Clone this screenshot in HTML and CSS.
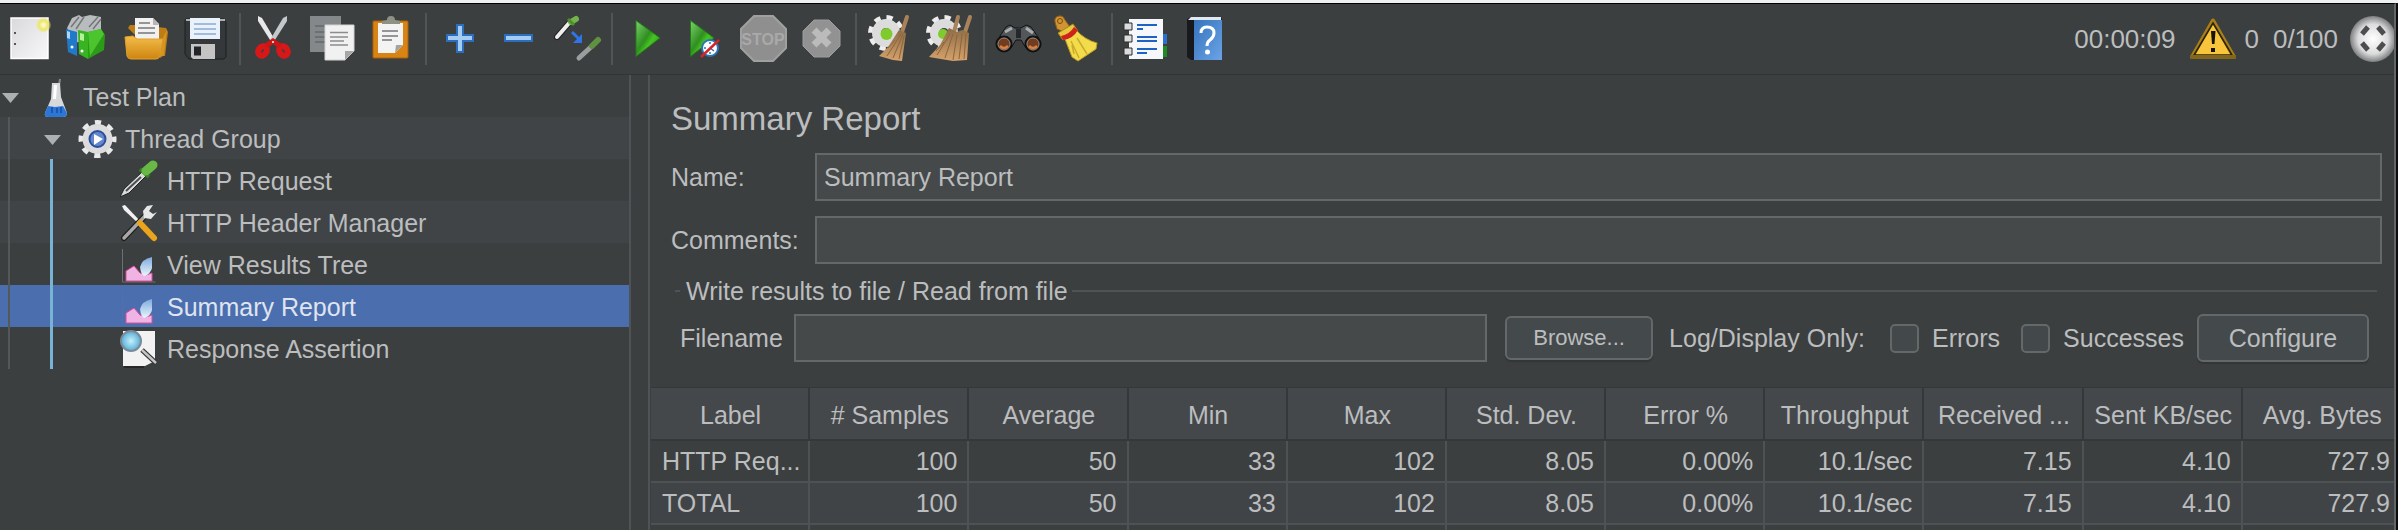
FILE: index.html
```html
<!DOCTYPE html>
<html lang="en">
<head>
<meta charset="utf-8">
<title>Summary Report</title>
<link rel="stylesheet" href="styles.css">
</head>
<body>
<svg class="defs" width="0" height="0" aria-hidden="true">
  <defs>
    <linearGradient id="paper" x1="0" y1="0" x2="1" y2="1"><stop offset="0" stop-color="#d9d9db"/><stop offset="1" stop-color="#f8f8fa"/></linearGradient>
    <linearGradient id="folder" x1="0" y1="0" x2="0" y2="1"><stop offset="0" stop-color="#f3bd4b"/><stop offset="1" stop-color="#cf8410"/></linearGradient>
    <linearGradient id="play" x1="0" y1="0" x2="1" y2="1"><stop offset="0" stop-color="#7fd070"/><stop offset=".45" stop-color="#2f8f20"/><stop offset=".6" stop-color="#46c522"/><stop offset="1" stop-color="#1d7a12"/></linearGradient>
    <linearGradient id="bristle" x1="0" y1="0" x2="0" y2="1"><stop offset="0" stop-color="#8e6b45"/><stop offset="1" stop-color="#d5a36c"/></linearGradient>
    <linearGradient id="book" x1="0" y1="0" x2="1" y2="1"><stop offset="0" stop-color="#3574bd"/><stop offset="1" stop-color="#6ba3e6"/></linearGradient>
    <linearGradient id="glass" x1="0" y1="0" x2="0" y2="1"><stop offset="0" stop-color="#7fa9dc"/><stop offset="1" stop-color="#e8f7fd"/></linearGradient>
    <radialGradient id="ball"><stop offset="0" stop-color="#ffffff"/><stop offset=".65" stop-color="#dcdcdc"/><stop offset="1" stop-color="#7d7f80"/></radialGradient>
    <radialGradient id="lens"><stop offset="0" stop-color="#c4f2fb"/><stop offset="1" stop-color="#5aabd8"/></radialGradient>
    <radialGradient id="glow"><stop offset="0" stop-color="#fffde0"/><stop offset=".6" stop-color="#ece66a"/><stop offset="1" stop-color="#ece66a" stop-opacity=".2"/></radialGradient>
  </defs>
</svg>
<div class="strip"></div>
<div class="window">
  <header class="toolbar">
    <button class="tool" aria-label="New"><svg viewBox="2 4 58 70"><path d="M11 18H48V58.500H11Z" fill="url(#paper)" stroke="#fff" stroke-width="1.500"/><path d="M15 32v2M15 43v2" stroke="#555" stroke-width="2"/><circle cx="43.500" cy="25" r="7.500" fill="url(#glow)"/></svg></button>
    <button class="tool" aria-label="Templates"><svg viewBox="60 4 58 70"><path d="M67 28l5-10 7-3 3 2 8-2 11 2v18l-26 8Z" fill="#b9bcbe"/><path d="M71 27l8-10M76 29l8-12M89 27l9-10M93 29l8-10" stroke="#73777a" stroke-width="1.500"/><path d="M66 29l11 3v24l-9-4Z" fill="#2179c9"/><path d="M67 31l3 1v7l-3-1Z" fill="#a9d6fa"/><path d="M78 30l10 2v27l-9-5Z" fill="#38b423"/><path d="M88 32l13-3 4 6-1 15-16 9Z" fill="#2c9c18"/><path d="M88 32l13-3 3 5-14 22Z" fill="#4cc42e"/><path d="M80 33l4 1v7l-4-1Z" fill="#b7f09b"/><circle cx="82" cy="51" r="1.500" fill="#fff"/><circle cx="72" cy="47" r="1.500" fill="#fff"/></svg></button>
    <button class="tool" aria-label="Open"><svg viewBox="118 4 58 70"><path d="M128 28l2-3h10l26 3 2 4-3 24h-9Z" fill="#bd7d14"/><path d="M135 18h18l6 6v16h-24Z" fill="#f1f1f1"/><path d="M153 18l6 7h-6Z" fill="#b5b5b5"/><path d="M139 23h11M138 28h17M138 33h17" stroke="#777" stroke-width="1.500"/><path d="M125 37l8-1 4 3h26l-3 17q-1 3-4 3h-25q-3 0-4-3Z" fill="url(#folder)" stroke="#dfa02a"/><path d="M163 38l4-9-3 26-4 3Z" fill="#d59520"/></svg></button>
    <button class="tool" aria-label="Save"><svg viewBox="176 4 58 70"><path d="M186 19H224l2 3V57l-2 2H189l-4-5V21Z" fill="#35383b" stroke="#1d1f21"/><path d="M186 19h5v2h-5ZM220 19h5v2h-5Z" fill="#b0b0b0"/><path d="M190 18h30v21h-30Z" fill="#e9f2fb"/><path d="M194 24h22M194 29h22M194 34h22" stroke="#89abd2" stroke-width="1.500"/><path d="M191 44h24v15h-22l-2-2Z" fill="#c4c4c4"/><path d="M194 46.500h7v9h-7Z" fill="#22242a"/></svg></button>
    <span class="sep"></span>
    <button class="tool" aria-label="Cut"><svg viewBox="246 4 58 70"><path d="M258 16l4 2 13 22-3 3-14-22Z" fill="#e6e8ea"/><path d="M287 16l-4 2-13 22 3 3 14-22Z" fill="#c5c8cb"/><ellipse cx="262.500" cy="51" rx="4" ry="5" transform="rotate(35 262.500 51)" fill="none" stroke="#d81818" stroke-width="6"/><ellipse cx="283.500" cy="51" rx="4" ry="5" transform="rotate(-35 283.500 51)" fill="none" stroke="#d81818" stroke-width="6"/><path d="M266 46l7-5 7 5" fill="none" stroke="#cf1414" stroke-width="5"/><circle cx="273" cy="42" r="1" fill="#fff"/></svg></button>
    <button class="tool" aria-label="Copy"><svg viewBox="304 4 58 70"><path d="M310 16H341V52H310Z" fill="#85888a"/><path d="M315 26h20M315 32h20M315 37h12M315 42h12" stroke="#65686a" stroke-width="1.500"/><path d="M325 25H354V51l-9 9H325Z" fill="#f1f1f1" stroke="#d3d3d3"/><path d="M354 51h-9v9Z" fill="#a7a7a7"/><path d="M330 32.500h18M330 37h18M330 41h14M330 45h18" stroke="#8c8c8c" stroke-width="1.500"/></svg></button>
    <button class="tool" aria-label="Paste"><svg viewBox="362 4 58 70"><rect x="373" y="21" width="35" height="37" rx="1" fill="#d78415" stroke="#a9610b"/><path d="M378 23h25v22l-8 8h-17Z" fill="#f3f3f3"/><path d="M403 45h-7l-1 8Z" fill="#a3a3a3"/><path d="M382 31h16M382 36h16M382 40h10" stroke="#777" stroke-width="1.500"/><path d="M382 24v-3l5-1q0-4 4-4t4 4l5 1v3Z" fill="#8e9186"/></svg></button>
    <span class="sep"></span>
    <button class="tool" aria-label="Expand All"><svg viewBox="432 4 58 70"><path d="M457 25h6v10h10v6h-10v11h-6V41h-10v-6h10Z" fill="#a5cbf0" stroke="#2a6ebd" stroke-width="2"/></svg></button>
    <button class="tool" aria-label="Collapse All"><svg viewBox="490 4 58 70"><path d="M505 35h27v6h-27Z" fill="#a5cbf0" stroke="#2a6ebd" stroke-width="2"/></svg></button>
    <button class="tool" aria-label="Toggle"><svg viewBox="548 4 58 70"><path d="M557 37l13-15" stroke="#222" stroke-width="6" stroke-linecap="round"/><path d="M557 37l13-15" stroke="#eee" stroke-width="4" stroke-linecap="round"/><path d="M571 22l5-3" stroke="#74b34c" stroke-width="6" stroke-linecap="round"/><path d="M568 19l6 6" stroke="#4c8f2c" stroke-width="3"/><path d="M572 32l7 7" stroke="#2f74e8" stroke-width="3"/><path d="M582 34v9h-9Z" fill="#2f74e8"/><path d="M579 58l13-12" stroke="#9b9d9e" stroke-width="5" stroke-linecap="round"/><path d="M592 46l6-6" stroke="#5e9140" stroke-width="6" stroke-linecap="round"/></svg></button>
    <span class="sep"></span>
    <button class="tool" aria-label="Start"><svg viewBox="618 4 58 70"><path d="M636 20.500L660 38 636 56.500Z" fill="url(#play)" stroke="#1f7d14" stroke-linejoin="round"/></svg></button>
    <button class="tool" aria-label="Start no pauses"><svg viewBox="676 4 58 70"><path d="M690.500 20.500L714 38 690.500 56.500Z" fill="url(#play)" stroke="#1f7d14" stroke-linejoin="round"/><circle cx="710" cy="48" r="8" fill="#fff" stroke="#2b74b8" stroke-width="2"/><path d="M710 42v2M710 52v2M704 48h2M710 48l4 3" stroke="#2b74b8" stroke-width="1.500"/><path d="M701 57l18-17" stroke="#d6242c" stroke-width="2.500"/></svg></button>
    <button class="tool" aria-label="Stop" disabled><svg viewBox="734 4 58 70"><path d="M754 16h19l13 13v19l-13 13h-19l-13-13V29Z" fill="#8f8f8f" stroke="#a0a0a0" stroke-width="2"/><text class="stop-text" x="763" y="45" text-anchor="middle">STOP</text></svg></button>
    <button class="tool" aria-label="Shutdown" disabled><svg viewBox="792 4 58 70"><path d="M814 20h15l11 11v15l-11 11h-15l-11-11V31Z" fill="#929292" stroke="#9d9d9d"/><path d="M814 30l15 15M829 30l-15 15" stroke="#bbb" stroke-width="7"/></svg></button>
    <span class="sep"></span>
    <button class="tool" aria-label="Clear"><svg viewBox="862 4 58 70"><circle cx="886" cy="33" r="15" fill="none" stroke="#ededed" stroke-width="6" stroke-dasharray="6 5.780"/><circle cx="886" cy="33" r="9.500" fill="none" stroke="#dcdcdc" stroke-width="9"/><circle cx="886.500" cy="34" r="6" fill="#7fcb2d"/><path d="M907 17l-5 15" stroke="#a98259" stroke-width="4" stroke-linecap="round"/><path d="M899 30l7 3-4 28-9-1-14-4 9-9Z" fill="url(#bristle)"/><path d="M901 34l-14 22M903 34l-10 24M904 36l-5 23M895 40l-7 8" stroke="#8a653e" stroke-width="1" fill="none"/></svg></button>
    <button class="tool" aria-label="Clear All"><svg viewBox="920 4 58 70"><circle cx="944" cy="33" r="15" fill="none" stroke="#ededed" stroke-width="6" stroke-dasharray="6 5.780"/><circle cx="944" cy="33" r="9.500" fill="none" stroke="#dcdcdc" stroke-width="9"/><circle cx="943" cy="34" r="5" fill="#7fcb2d"/><path d="M958 17l-4 15M970 17l-5 15" stroke="#a98259" stroke-width="4" stroke-linecap="round"/><path d="M949 28l8 4 5-2 7 3-2 27-14 1-24-4 11-12Z" fill="url(#bristle)"/><path d="M950 34l-13 21M953 34l-8 24M957 35l-4 25M962 34l-3 25M966 34l-2 25M944 42l-8 9" stroke="#8a653e" stroke-width="1" fill="none"/></svg></button>
    <span class="sep"></span>
    <button class="tool" aria-label="Search"><svg viewBox="990 4 58 70"><path d="M1010 25l5 3h6l5-3 5 2 7 10 3 8-15 3-5-8h-5l-5 8-14-3 3-9 6-9Z" fill="#54575a" stroke="#111"/><path d="M1005 32l7-4M1026 28l7 5" stroke="#a8adb1" stroke-width="3"/><path d="M1016 29h5v9h-5Z" fill="#25282b"/><circle cx="1004" cy="44" r="7.500" fill="#713c20" stroke="#111" stroke-width="2"/><circle cx="1033" cy="44" r="7.500" fill="#713c20" stroke="#111" stroke-width="2"/><circle cx="1004" cy="44" r="6" fill="none" stroke="#90857d"/><circle cx="1033" cy="44" r="6" fill="none" stroke="#90857d"/><path d="M1000 46q4 4 8 0M1029 46q4 4 8 0" stroke="#d68142" stroke-width="2.500" fill="none"/></svg></button>
    <button class="tool" aria-label="Reset Search"><svg viewBox="1048 4 58 70"><path d="M1055 22q-1-5 4-6 4-1 6 4l5 7-6 5-7-3Z" fill="#d09434" stroke="#8f5d15"/><circle cx="1060" cy="21" r="2.500" fill="none" stroke="#7b4d0c"/><path d="M1058 33l15-9 5 7-15 9Z" fill="#e8c63d" stroke="#a5861c"/><path d="M1065 39l11-9q9 10 21 13l-1 6-18 12-6-4Z" fill="#f2dc4c" stroke="#c09c20"/><path d="M1071 41l8 17M1077 38l10 16M1072 45l2 9" stroke="#cdaa2b" stroke-width="1.500"/><path d="M1061 36q9-2 13-9l4 3q-5 9-15 10Z" fill="#cf241b"/></svg></button>
    <span class="sep"></span>
    <button class="tool" aria-label="Function Helper"><svg viewBox="1118 4 58 70"><path d="M1160 34h7v10h-7Z" fill="#2c6fd0"/><path d="M1160 46h7v11h-7Z" fill="#1d8a22"/><path d="M1129 19h34v40h-34Z" fill="#f5f7fb"/><path d="M1137 25h20M1137 29h6M1137 37h20M1137 41h20M1137 49h20M1137 53h10" stroke="#1d62c4" stroke-width="2"/><path d="M1124 23h8v7h-8ZM1124 35h8v7h-8ZM1124 48h8v7h-8Z" fill="#dcdcdc" stroke="#2a2c2e"/></svg></button>
    <button class="tool" aria-label="Help"><svg viewBox="1176 4 58 70"><path d="M1187 19l4-2h30l1 3v40h-31l-4-3Z" fill="#17191c"/><path d="M1188 20l3-3h30v3Z" fill="#e1e8ef"/><path d="M1194 20h28v40h-28Z" fill="url(#book)"/><path d="M1201 33q0-6 6-6 7 0 7 6 0 4-4 7-3 2-3 6" fill="none" stroke="#fff" stroke-width="3"/><circle cx="1207.500" cy="52" r="2.500" fill="#fff"/></svg></button>
    <div class="status">
      <span class="elapsed">00:00:09</span>
      <button class="warn"><svg width="48" height="44" viewBox="2188 16 48 44" aria-hidden="true"><path d="M2212 19.500L2233 56H2191Z" fill="#f7c43b" stroke="#a87f16" stroke-width="4" stroke-linejoin="round"/><path d="M2212 22L2231 54H2193Z" fill="none" stroke="#29220a" stroke-width="1.500"/><path d="M2189 54h46v3q0 1-2 1h-42q-2 0-2-1Z" fill="#82661c"/><path d="M2210 30h4.500l-1 13h-2.500Z" fill="#171304"/><path d="M2210 47h4v4h-4Z" fill="#171304"/></svg><span>0</span></button>
      <span class="threads">0/100</span>
      <svg class="ball" width="44" height="48" viewBox="2350 15 44 48" aria-hidden="true"><circle cx="2373" cy="39" r="23" fill="url(#ball)"/><path d="M2362 34l6-7M2378 27l6 7M2362 43l6 7M2384 43l-6 7" stroke="#4b4d4e" stroke-width="5"/></svg>
    </div>
  </header>
  <main class="split">
    <nav class="tree" aria-label="Test plan elements">
      <ul>
        <li>
          <div class="row l0"><svg class="arrow" viewBox="0 0 36 42"><path d="M2 18h17l-8.500 10Z"/></svg><svg class="icon" viewBox="36 75 40 42"><path d="M59 85l1-6" stroke="#888" stroke-width="2"/><path d="M52 83h8l1 14 6 16q0 4-4 4H48q-4 0-3-4l6-14Z" fill="#d7d9db"/><path d="M48 106l7 1 8-1 4 7q0 4-4 4H48q-4 0-3-4Z" fill="#2c76d8"/><path d="M54 85h3l-1 14h-3Z" fill="#fff"/><path d="M52 107v6M57 108v5M61 107v6" stroke="#174d9f" stroke-width="1.500"/></svg><span>Test Plan</span></div>
          <ul class="guide g0">
            <li>
              <div class="row l1 alt"><svg class="arrow" viewBox="0 0 36 42"><path d="M2 18h17l-8.500 10Z"/></svg><svg class="icon" viewBox="78 117 40 42"><circle cx="97.500" cy="139" r="16" fill="none" stroke="#e9e9e9" stroke-width="6" stroke-dasharray="6 6.566" stroke-dashoffset="3"/><circle cx="97.500" cy="139" r="12" fill="#2b4f9c" stroke="#dcdcdc" stroke-width="6"/><circle cx="97.500" cy="139" r="7" fill="#6487c9"/><path d="M94 134l9 5-9 6Z" fill="#fff"/></svg><span>Thread Group</span></div>
              <ul class="guide g1">
                <li><div class="row l2"><svg class="icon" viewBox="120 159 40 42"><path d="M120 197l4-8 18-17 4 4-17 17Z" fill="#d9dbdd" stroke="#222"/><path d="M126 191l15-14" stroke="#4b4d4f" stroke-width="2"/><path d="M140 169l9 8" stroke="#33801f" stroke-width="4"/><path d="M146 171l7-6" stroke="#68b846" stroke-width="9" stroke-linecap="round"/></svg><span>HTTP Request</span></div></li>
                <li><div class="row l2 alt"><svg class="icon" viewBox="120 201 40 42"><path d="M122 206l3-1 16 17-2 2-15-14Z" fill="#f1f1f1"/><path d="M124 238l22-23" stroke="#1c1c1c" stroke-width="6" stroke-linecap="round"/><path d="M124 238l22-23" stroke="#a8a8a8" stroke-width="3.500" stroke-linecap="round"/><path d="M153 205l-6 1-4 5 1 7 7 1 6-7-4 2-4-3Z" fill="#e7e7e7"/><path d="M140 223l14 15" stroke="#eba41c" stroke-width="6" stroke-linecap="round"/></svg><span>HTTP Header Manager</span></div></li>
                <li><div class="row l2"><svg class="icon" viewBox="120 243 40 42"><path d="M122.500 249v33h33" fill="none" stroke="#6d6f72"/><path d="M126 271l8-5 6 7 6 2 6-2v8h-26Z" fill="#efb3e4" stroke="#d84f9c"/><path d="M152 257q-10 2-12 10 1 9 5 9 6-3 7-8Z" fill="url(#glass)"/></svg><span>View Results Tree</span></div></li>
                <li><div class="row l2 selected" aria-current="true"><svg class="icon" viewBox="120 243 40 42"><path d="M122.500 249v33h33" fill="none" stroke="#5270ab"/><path d="M126 271l8-5 6 7 6 2 6-2v8h-26Z" fill="#efb3e4" stroke="#d84f9c"/><path d="M152 257q-10 2-12 10 1 9 5 9 6-3 7-8Z" fill="url(#glass)"/></svg><span>Summary Report</span></div></li>
                <li><div class="row l2"><svg class="icon" viewBox="120 327 40 42"><path d="M123 331h32v30l-10 5h-22Z" fill="#f2f2f3"/><path d="M124 367h20" stroke="#111"/><path d="M142 350l14 13" stroke="#333" stroke-width="5"/><path d="M142 350l14 13" stroke="#c5c5c5" stroke-width="2.500"/><circle cx="131" cy="341" r="10" fill="url(#lens)" stroke="#788b96" stroke-width="2"/></svg><span>Response Assertion</span></div></li>
              </ul>
            </li>
          </ul>
        </li>
      </ul>
    </nav>
    <section class="panel">
      <form class="form">
        <h1>Summary Report</h1>
        <div class="field"><label for="name">Name:</label><input id="name" type="text" value="Summary Report"></div>
        <div class="field"><label for="comments">Comments:</label><input id="comments" type="text"></div>
        <fieldset>
          <legend>Write results to file / Read from file</legend>
          <div class="file">
            <label class="filename" for="filename">Filename</label>
            <input id="filename" type="text">
            <button class="browse" type="button">Browse...</button>
            <span class="log">Log/Display Only:</span>
            <label class="check"><input type="checkbox">Errors</label>
            <label class="check"><input type="checkbox">Successes</label>
            <button class="configure" type="button">Configure</button>
          </div>
        </fieldset>
      </form>
      <div class="results">
        <table>
          <thead><tr><th>Label</th><th># Samples</th><th>Average</th><th>Min</th><th>Max</th><th>Std. Dev.</th><th>Error %</th><th>Throughput</th><th>Received ...</th><th>Sent KB/sec</th><th>Avg. Bytes</th></tr></thead>
          <tbody>
            <tr><td>HTTP Req...</td><td>100</td><td>50</td><td>33</td><td>102</td><td>8.05</td><td>0.00%</td><td>10.1/sec</td><td>7.15</td><td>4.10</td><td>727.9</td></tr>
            <tr class="alt"><td>TOTAL</td><td>100</td><td>50</td><td>33</td><td>102</td><td>8.05</td><td>0.00%</td><td>10.1/sec</td><td>7.15</td><td>4.10</td><td>727.9</td></tr>
            <tr><td></td><td></td><td></td><td></td><td></td><td></td><td></td><td></td><td></td><td></td><td></td></tr>
          </tbody>
        </table>
      </div>
    </section>
  </main>
</div>
</body>
</html>
```
FILE: styles.css
```css
* { box-sizing: border-box; }

body {
  margin: 0;
  height: 100vh;
  display: flex;
  flex-direction: column;
  overflow: hidden;
  background: #0b0c0d;
  color: #bbbdbe;
  font: 25px/42px "Liberation Sans", Arial, sans-serif;
}

.defs { position: absolute; }

button, input { font: inherit; color: inherit; margin: 0; }

.strip { flex: none; height: 3px; background: #eef0f2; }

.window {
  flex: 1;
  min-height: 0;
  display: flex;
  flex-direction: column;
  margin-right: 2px;
  border-top: 1px solid #000;
  border-right: 2px solid #626566;
  background: #3c3f40;
}

/* Toolbar */
.toolbar {
  flex: none;
  display: flex;
  align-items: center;
  height: 71px;
  padding-left: 2px;
  border-bottom: 1px solid #323536;
}
.tool {
  flex: none;
  width: 58px;
  height: 70px;
  padding: 0;
  border: 0;
  background: none;
}
.tool svg { display: block; width: 58px; height: 70px; }
.stop-text { font: bold 16px "Liberation Sans", Arial, sans-serif; fill: #a9a9a9; }
.sep { flex: none; width: 2px; height: 52px; margin: 0 5px; background: #515557; }
.status { display: flex; align-items: center; margin-left: auto; font-size: 26px; }
.elapsed { margin-right: 14px; }
.warn {
  display: flex;
  align-items: center;
  gap: 7px;
  padding: 0;
  border: 0;
  background: none;
}
.warn svg, .ball { display: block; }
.threads { margin: 0 12px 0 14px; }

/* Split pane */
.split { flex: 1; min-height: 0; display: flex; }

.tree {
  flex: none;
  width: 631px;
  border-right: 2px solid #505355;
}
.tree ul { margin: 0; padding: 0; list-style: none; }
.row { display: flex; height: 42px; line-height: 45px; white-space: nowrap; }
.row.alt { background: #414447; }
.row.selected { background: #4b6eaf; color: #dfe4ee; }
.l1 { padding-left: 42px; }
.l2 { padding-left: 120px; }
.arrow { flex: none; width: 36px; height: 42px; fill: #adb0b1; }
.icon { flex: none; width: 40px; height: 42px; margin-right: 7px; }
.guide { position: relative; }
.guide::before {
  content: "";
  position: absolute;
  z-index: 1;
  top: 0;
  bottom: 0;
  width: 2px;
}
.g0::before { left: 8px; background: #555859; }
.g1::before { left: 50px; width: 3px; background: #78b3d6; }

/* Editor panel */
.panel {
  flex: 1;
  min-width: 0;
  display: flex;
  flex-direction: column;
  margin-left: 17px;
  border-left: 2px solid #505355;
}
.form { flex: none; padding: 24px 12px 25px 21px; }
h1 { margin: 0 0 14px; font-size: 33px; font-weight: normal; line-height: 40px; }
.field { display: flex; align-items: center; margin-bottom: 15px; }
.field label { flex: none; width: 144px; }
input[type="text"] {
  flex: 1;
  min-width: 0;
  height: 48px;
  padding: 0 7px;
  border: 2px solid #646868;
  border-radius: 0;
  background: #45494a;
  outline: 0;
}

fieldset {
  min-width: 0;
  margin: -3px 5px 0 4px;
  padding: 10px 8px 0 5px;
  border: 0 solid #505355;
  border-top-width: 2px;
}
legend { padding: 0 4px 0 6px; line-height: 30px; }
.file { display: flex; align-items: center; margin-top: -2px; white-space: nowrap; }
.filename { width: 114px; }
.browse, .configure {
  flex: none;
  padding: 0;
  border: 2px solid #646868;
  border-radius: 6px;
  background: #44494b;
  box-shadow: 0 2px 1px #333637;
}
.browse { width: 148px; height: 44px; margin: 0 16px 0 18px; font-size: 22px; line-height: 40px; }
.configure { width: 172px; height: 48px; line-height: 44px; }
.log { margin-right: 25px; }
.check { display: flex; align-items: center; gap: 13px; height: 42px; margin-right: 21px; }
.check + .check { margin-right: 13px; }
.check input {
  appearance: none;
  width: 29px;
  height: 29px;
  border: 2px solid #646868;
  border-radius: 5px;
  background: #43484a;
}

/* Results table */
.results { flex: 1; min-height: 0; overflow: hidden; padding-left: 1px; }
table {
  width: calc(100% + 8px);
  table-layout: fixed;
  border-collapse: separate;
  border-spacing: 0;
  white-space: nowrap;
}
th {
  height: 54px;
  padding: 2px 0 0 2px;
  border: solid #34383a;
  border-width: 1px 2px 2px 0;
  background: #45484b;
  font-weight: normal;
  text-align: center;
}
td {
  height: 42px;
  padding: 0 10px;
  border: solid #4e5254;
  border-width: 0 2px 2px 0;
  line-height: 40px;
  text-align: right;
}
td:first-child { padding-left: 11px; text-align: left; }
tr.alt td { background: #414447; }
```
